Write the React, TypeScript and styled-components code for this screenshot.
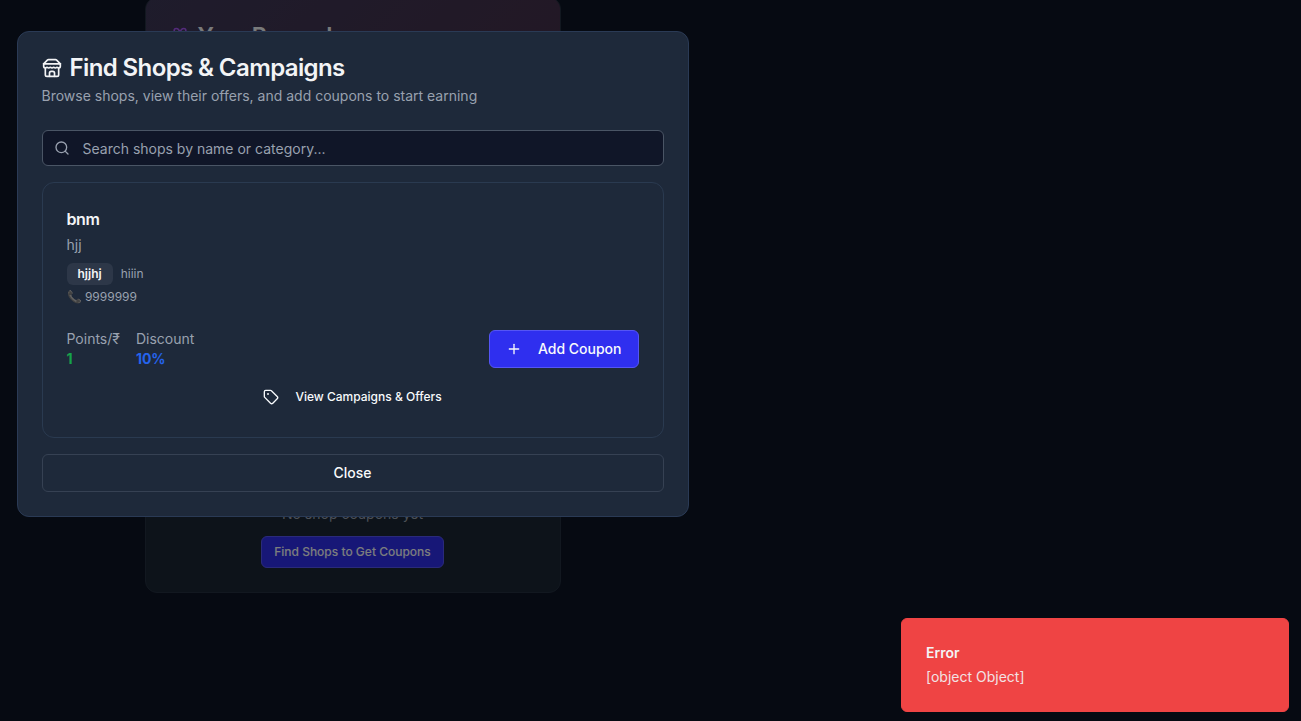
import React from "react";
import styled, { createGlobalStyle } from "styled-components";
import { Gift, Plus, Search, Tag } from "lucide-react";

const GlobalStyle = createGlobalStyle`
  * { box-sizing: border-box; }
  html, body { margin: 0; height: 100%; }
  body {
    background: #0c1424;
    color: #f3f4f6;
    font-family: Inter, "Noto Sans", "Liberation Sans", sans-serif;
    font-size: 14px;
    line-height: 20px;
  }
  h1, h2, h3, p, dl, dt, dd { margin: 0; }
  button, input { font: inherit; color: inherit; }
  svg { flex-shrink: 0; }
`;

const Screen = styled.div`
  position: relative;
  min-height: 100vh;
  overflow: hidden;
`;

const Page = styled.main`
  display: flex;
  justify-content: center;
  width: 100%;
  max-width: 705px;
  padding: 0 16px;
`;

const RewardsCard = styled.section`
  display: flex;
  flex-direction: column;
  width: 100%;
  max-width: 416px;
  min-height: 596px;
  margin-top: -3px;
  border: 1px solid #243040;
  border-radius: 12px;
  background: #1b2735;
  overflow: hidden;
`;

const RewardsHeader = styled.header`
  padding: 24px;
  background: linear-gradient(135deg, #3d3858, #46304a);
`;

const RewardsTitle = styled.h1`
  display: flex;
  align-items: center;
  gap: 8px;
  font-size: 23px;
  line-height: 28px;
  font-weight: 600;
  letter-spacing: -0.025em;

  svg { color: #a855f7; }
`;

const RewardsEmpty = styled.div`
  display: flex;
  flex: 1;
  flex-direction: column;
  align-items: center;
  justify-content: flex-end;
  gap: 12px;
  padding: 24px;
  color: #99a1af;
`;

const Button = styled.button<{ $kind: "primary" | "outline" | "ghost"; $small?: boolean }>`
  display: inline-flex;
  align-items: center;
  justify-content: center;
  gap: 16px;
  min-height: ${(p) => (p.$small ? 32 : 38)}px;
  padding: 0 ${(p) => (p.$small ? 12 : 16)}px;
  border: 1px solid
    ${(p) => ({ primary: "#5555f5", outline: "#364153", ghost: "transparent" })[p.$kind]};
  border-radius: 6px;
  background: ${(p) => (p.$kind === "primary" ? "#2f2fef" : "transparent")};
  color: #f8fafc;
  font-size: ${(p) => (p.$small ? 12 : 14)}px;
  font-weight: 500;
  cursor: pointer;
`;

const Overlay = styled.div`
  position: absolute;
  inset: 0;
  background: rgba(0, 0, 0, 0.5);
`;

const DialogArea = styled.div`
  position: absolute;
  top: 0;
  left: 0;
  display: flex;
  justify-content: center;
  width: 100%;
  max-width: 705px;
  padding: 31px 16px;
`;

const Dialog = styled.div`
  display: flex;
  flex-direction: column;
  width: 100%;
  max-width: 672px;
  padding: 24px;
  border: 1px solid #2a3a55;
  border-radius: 12px;
  background: #1e293a;
`;

const DialogHeader = styled.header`
  display: flex;
  flex-direction: column;
  gap: 6px;
  margin-bottom: 24px;
`;

const DialogTitle = styled.h2`
  display: flex;
  align-items: center;
  gap: 8px;
  font-size: 24px;
  line-height: 24px;
  font-weight: 600;
  letter-spacing: -0.025em;
`;

const Muted = styled.p`
  color: #99a1af;
`;

const DialogBody = styled.div`
  display: flex;
  flex-direction: column;
  gap: 16px;
`;

const SearchField = styled.label`
  display: flex;
  align-items: center;
  gap: 13px;
  height: 36px;
  padding: 0 11px;
  border: 1px solid #4a5565;
  border-radius: 6px;
  background: #101628;
  color: #99a1af;
`;

const SearchInput = styled.input`
  flex: 1;
  min-width: 0;
  padding: 2px 0 0;
  border: 0;
  outline: 0;
  background: transparent;
  color: #f3f4f6;

  &::placeholder { color: #99a1af; opacity: 1; }
`;

const ShopCard = styled.article`
  display: flex;
  flex-direction: column;
  padding: 24px;
  border: 1px solid #2a3a50;
  border-radius: 12px;
`;

const ShopInfo = styled.div`
  display: flex;
  flex-direction: column;
  gap: 4px;
  margin-bottom: 24px;
`;

const ShopName = styled.h3`
  font-size: 16px;
  line-height: 24px;
  font-weight: 600;
  letter-spacing: -0.025em;
`;

const TagRow = styled.div`
  display: flex;
  align-items: center;
  gap: 8px;
  margin-top: 4px;
`;

const Badge = styled.span`
  padding: 3px 11px;
  border-radius: 6px;
  background: #2d3748;
  font-size: 12px;
  line-height: 16px;
  font-weight: 600;
`;

const Small = styled.span`
  color: #99a1af;
  font-size: 12px;
  line-height: 16px;
`;

const StatsRow = styled.div`
  display: flex;
  align-items: center;
  justify-content: space-between;
  margin-bottom: 12px;
`;

const Stats = styled.dl`
  display: flex;
  gap: 16px;
`;

const StatLabel = styled.dt`
  color: #99a1af;
`;

const StatValue = styled.dd<{ $color: string }>`
  color: ${(p) => p.$color};
  font-weight: 700;
`;

const Toast = styled.div`
  position: fixed;
  right: 12px;
  bottom: 9px;
  display: flex;
  flex-direction: column;
  gap: 4px;
  width: 388px;
  max-width: calc(100vw - 24px);
  padding: 24px;
  border: 1px solid #ef4444;
  border-radius: 6px;
  background: #ef4444;
`;

const ToastTitle = styled.strong`
  font-weight: 600;
`;

const ToastText = styled.p`
  opacity: 0.9;
`;

const StoreIcon = () => (
  <svg
    width="20"
    height="20"
    viewBox="0 0 24 24"
    fill="none"
    stroke="currentColor"
    strokeWidth="2"
    strokeLinecap="round"
    strokeLinejoin="round"
    aria-hidden="true"
  >
    <path d="m2 7 4.41-4.41A2 2 0 0 1 7.83 2h8.34a2 2 0 0 1 1.42.59L22 7" />
    <path d="M4 12v8a2 2 0 0 0 2 2h12a2 2 0 0 0 2-2v-8" />
    <path d="M15 22v-4a2 2 0 0 0-2-2h-2a2 2 0 0 0-2 2v4" />
    <path d="M2 7h20" />
    <path d="M22 7v3a2 2 0 0 1-2 2a2.7 2.7 0 0 1-1.59-.63.7.7 0 0 0-.82 0A2.7 2.7 0 0 1 16 12a2.7 2.7 0 0 1-1.59-.63.7.7 0 0 0-.82 0A2.7 2.7 0 0 1 12 12a2.7 2.7 0 0 1-1.59-.63.7.7 0 0 0-.82 0A2.7 2.7 0 0 1 8 12a2.7 2.7 0 0 1-1.59-.63.7.7 0 0 0-.82 0A2.7 2.7 0 0 1 4 12a2 2 0 0 1-2-2V7" />
  </svg>
);

const stats = [
  { label: "Points/₹", value: "1", color: "#16a34a" },
  { label: "Discount", value: "10%", color: "#2563eb" },
];

export default function App() {
  return (
    <Screen>
      <GlobalStyle />
      <Page>
        <RewardsCard>
          <RewardsHeader>
            <RewardsTitle>
              <Gift size={20} />
              Your Rewards
            </RewardsTitle>
          </RewardsHeader>
          <RewardsEmpty>
            <p>No shop coupons yet</p>
            <Button $kind="primary" $small type="button">Find Shops to Get Coupons</Button>
          </RewardsEmpty>
        </RewardsCard>
      </Page>
      <Overlay />
      <DialogArea>
        <Dialog role="dialog" aria-modal="true" aria-labelledby="dialog-title">
          <DialogHeader>
            <DialogTitle id="dialog-title">
              <StoreIcon />
              Find Shops &amp; Campaigns
            </DialogTitle>
            <Muted>Browse shops, view their offers, and add coupons to start earning</Muted>
          </DialogHeader>
          <DialogBody>
            <SearchField>
              <Search size={16} aria-hidden="true" />
              <SearchInput
                type="text"
                aria-label="Search shops"
                placeholder="Search shops by name or category..."
              />
            </SearchField>
            <ShopCard>
              <ShopInfo>
                <ShopName>bnm</ShopName>
                <Muted>hjj</Muted>
                <TagRow>
                  <Badge>hjjhj</Badge>
                  <Small>hiiin</Small>
                </TagRow>
                <Small as="p">📞 9999999</Small>
              </ShopInfo>
              <StatsRow>
                <Stats>
                  {stats.map((s) => (
                    <div key={s.label}>
                      <StatLabel>{s.label}</StatLabel>
                      <StatValue $color={s.color}>{s.value}</StatValue>
                    </div>
                  ))}
                </Stats>
                <Button $kind="primary" type="button">
                  <Plus size={16} />
                  Add Coupon
                </Button>
              </StatsRow>
              <Button $kind="ghost" $small type="button">
                <Tag size={16} />
                View Campaigns &amp; Offers
              </Button>
            </ShopCard>
            <Button $kind="outline" type="button">Close</Button>
          </DialogBody>
        </Dialog>
      </DialogArea>
      <Toast role="alert">
        <ToastTitle>Error</ToastTitle>
        <ToastText>[object Object]</ToastText>
      </Toast>
    </Screen>
  );
}
